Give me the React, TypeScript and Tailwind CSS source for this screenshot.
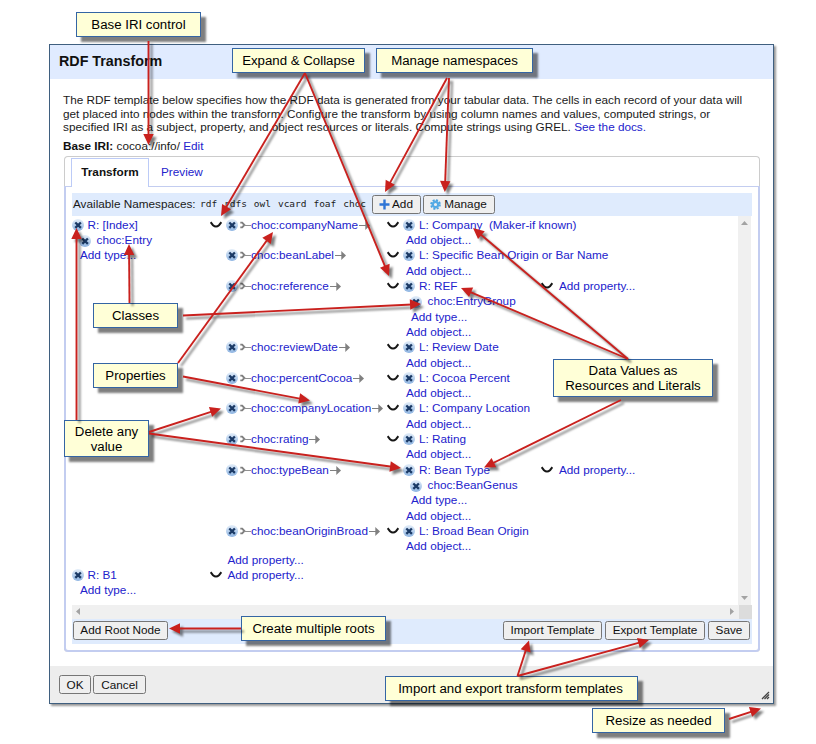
import React from 'react';

type Obj = { label: string; type?: string };

const properties: { name: string; object: Obj; hiddenCaret?: boolean }[] = [
  { name: 'choc:companyName', object: { label: 'L: Company\u00a0 (Maker-if known)' } },
  { name: 'choc:beanLabel', object: { label: 'L: Specific Bean Origin or Bar Name' } },
  { name: 'choc:reference', object: { label: 'R: REF', type: 'choc:EntryGroup' } },
  { name: 'choc:reviewDate', object: { label: 'L: Review Date' } },
  { name: 'choc:percentCocoa', object: { label: 'L: Cocoa Percent' } },
  { name: 'choc:companyLocation', object: { label: 'L: Company Location' } },
  { name: 'choc:rating', object: { label: 'L: Rating' } },
  { name: 'choc:typeBean', object: { label: 'R: Bean Type', type: 'choc:BeanGenus' }, hiddenCaret: true },
  { name: 'choc:beanOriginBroad', object: { label: 'L: Broad Bean Origin' } },
];

function DeleteIcon() {
  return (
    <svg className="block h-3 w-3 shrink-0" viewBox="0 0 12 12">
      <defs>
        <linearGradient id="del" x1="0" y1="0" x2="0" y2="1">
          <stop offset="0" stopColor="#e4eef9" />
          <stop offset="1" stopColor="#8db4e2" />
        </linearGradient>
      </defs>
      <circle cx="6" cy="6" r="6" fill="url(#del)" />
      <path d="M3.3 3.5L8.9 8.9M8.9 3.5L3.3 8.9" stroke="#1b3a66" strokeWidth="2.3" />
    </svg>
  );
}

function Caret() {
  return (
    <svg className="block h-3 w-3 shrink-0" viewBox="0 0 12 12">
      <path d="M0.6 3.2L3 6.2Q6 8.9 9 6.2L11.4 3.2" fill="none" stroke="#161616" strokeWidth="2" />
    </svg>
  );
}

function TailMark() {
  return (
    <svg className="block h-3 w-[11px] shrink-0" viewBox="0 0 11 12">
      <path d="M0.3 3.6H2.2L4.4 6L2.2 8.4H0.3" fill="none" stroke="#808080" strokeWidth="1.9" />
      <path d="M4.5 6.5H11" stroke="#909090" strokeWidth="1" />
    </svg>
  );
}

function HeadMark() {
  return (
    <svg className="block h-3 w-3 shrink-0" viewBox="0 0 12 12">
      <path d="M1 6.5H8" stroke="#808080" strokeWidth="1" />
      <path d="M7.3 2L12 6.5L7.3 11Z" fill="#808080" />
    </svg>
  );
}

function Row({ children, className = '' }: { children: React.ReactNode; className?: string }) {
  return <div className={`flex h-[15.32px] items-center ${className}`}>{children}</div>;
}

function TypeRows({ type }: { type: string }) {
  return (
    <>
      <Row className="pl-[7px]">
        <div className="pt-0.5"><DeleteIcon /></div>
        <span className="ml-[5.5px]">{type}</span>
      </Row>
      <Row className="pl-2">Add type...</Row>
    </>
  );
}

function ObjectNode({ node }: { node: Obj }) {
  return (
    <div>
      <Row>
        <div className="flex w-[138px] items-center">
          <DeleteIcon />
          <span className="ml-1">{node.label}</span>
        </div>
        {node.type && <><Caret /><span className="ml-[6px]">Add property...</span></>}
      </Row>
      {node.type && <TypeRows type={node.type} />}
      <Row className="pl-[3px]">Add object...</Row>
    </div>
  );
}

function Button({ children, className = '' }: { children: React.ReactNode; className?: string }) {
  return (
    <button className={`flex h-[19px] shrink-0 items-center justify-center whitespace-nowrap rounded-[2.5px] border border-[#767676] bg-[#efefef] text-[#111] ${className}`}>
      {children}
    </button>
  );
}

const callouts = [
  { text: ['Base IRI control'], box: 'left-[76px] top-[12px] w-[125px] h-[25px]' },
  { text: ['Expand & Collapse'], box: 'left-[232px] top-[48px] w-[133px] h-[25px]' },
  { text: ['Manage namespaces'], box: 'left-[376px] top-[48px] w-[157px] h-[25px]' },
  { text: ['Classes'], box: 'left-[93px] top-[303px] w-[85px] h-[25px]' },
  { text: ['Properties'], box: 'left-[93px] top-[363px] w-[85px] h-[25px]' },
  { text: ['Delete any', 'value'], box: 'left-[64px] top-[420px] w-[85px] h-[37px]' },
  { text: ['Data Values as', 'Resources and Literals'], box: 'left-[553px] top-[359px] w-[160px] h-[38px]' },
  { text: ['Create multiple roots'], box: 'left-[241px] top-[616px] w-[145px] h-[25px]' },
  { text: ['Import and export transform templates'], box: 'left-[385px] top-[676px] w-[253px] h-[25px] pr-0.5' },
  { text: ['Resize as needed'], box: 'left-[592px] top-[708px] w-[133px] h-[25px]' },
];

const arrows: [number, number, number, number][] = [
  [148.5, 41, 148.5, 145],
  [305, 73, 221, 216],
  [305, 73, 389, 276],
  [447, 78, 385, 192],
  [449, 78, 444.8, 192],
  [129.5, 303, 129, 244],
  [183, 315.5, 421, 304],
  [178, 363, 273, 232],
  [183, 376.5, 310, 400.5],
  [76.5, 420, 76.5, 228],
  [149, 432, 221, 408.5],
  [149, 433.5, 401, 468],
  [628, 359, 473, 228],
  [628, 359, 461, 288],
  [621, 400, 484, 467.5],
  [241, 628.5, 169, 628.5],
  [517.5, 676, 529, 640.5],
  [517.5, 676, 649, 640],
  [729, 719, 761, 708.5],
];

function Arrow({ a }: { a: [number, number, number, number] }) {
  const [x1, y1, x2, y2] = a;
  const len = Math.hypot(x2 - x1, y2 - y1);
  const angle = (Math.atan2(y2 - y1, x2 - x1) * 180) / Math.PI;
  return (
    <g transform={`translate(${x1} ${y1}) rotate(${angle})`}>
      <path d={`M0 0H${len - 9}`} stroke="#c9211e" strokeWidth="1.9" />
      <path d={`M${len} 0L${len - 11} -5.2V5.2Z`} fill="#c9211e" />
    </g>
  );
}

export default function App() {
  return (
    <div className="relative h-[744px] w-[816px] overflow-hidden bg-white pl-[49px] pt-11 font-['Liberation_Sans',Arial,sans-serif] text-[11.75px] leading-[13.6px] text-[#1a1a1a]">
      <div className="flex h-[660px] w-[725px] flex-col border border-[#3f5f7f] bg-white shadow-[2px_2px_2px_#999]">
        <h1 className="flex h-[34px] shrink-0 items-center bg-[#e0ebff] pl-[9px] text-[14.3px] font-bold text-[#111]">RDF Transform</h1>
        <div className="px-[13px] pt-[14px]">
          <p className="whitespace-nowrap">
            The RDF template below specifies how the RDF data is generated from your tabular data. The cells in each record of your data will<br />
            get placed into nodes within the transform. Configure the transform by using column names and values, computed strings, or<br />
            specified IRI as a subject, property, and object resources or literals. Compute strings using GREL. <a className="text-[#2222cc]">See the docs.</a>
          </p>
          <p className="mt-[5px]"><b className="text-[#111]">Base IRI:</b> cocoa://info/ <a className="text-[#2222cc]">Edit</a></p>
        </div>

        <div className="ml-[14px] mt-[3.2px] flex h-[496px] w-[696px] shrink-0 flex-col rounded-[4px] border-x border-t border-[#ccc]">
          <div className="flex h-[29px] shrink-0 items-end pl-[6px]">
            <div className="z-10 -mb-px flex h-[29px] w-[78px] items-center justify-center border border-b-0 border-[#bccbf7] bg-white pb-0.5 font-bold text-[#111]">Transform</div>
            <div className="flex h-[29px] items-center pl-3 pt-px text-[#2222cc]">Preview</div>
          </div>
          <div className="-mx-px flex grow flex-col rounded-b-[4px] border-2 border-t border-[#c3cdf0] px-[6px] pt-[6px]">
            <div className="flex h-[23px] shrink-0 items-center bg-[#dfebfd] pl-px">
              <span className="w-[127px] shrink-0">Available Namespaces:</span>
              <div className="flex w-[171.5px] shrink-0 gap-[6.9px] whitespace-nowrap font-['DejaVu_Sans_Mono',monospace] text-[9.5px]">
                <span>rdf</span><span>rdfs</span><span>owl</span><span>vcard</span><span>foaf</span><span>choc</span>
              </div>
              <Button className="w-[49px]">
                <svg className="mr-0.5 h-[11px] w-[11px]" viewBox="0 0 11 11"><path d="M5.5 0.5V10.5M0.5 5.5H10.5" stroke="#2f75d6" strokeWidth="2.4" /></svg>
                Add
              </Button>
              <Button className="ml-0.5 w-[72px]">
                <svg className="mr-[3px] h-[11px] w-[11px] shrink-0" viewBox="0 0 12 12">
                  <circle cx="6" cy="6" r="4.8" fill="none" stroke="#4ba3e0" strokeWidth="2" strokeDasharray="2.2 1.57" />
                  <circle cx="6" cy="6" r="3" fill="none" stroke="#55abe5" strokeWidth="2.6" />
                </svg>
                Manage
              </Button>
            </div>

            <div className="flex h-[389px] shrink-0 text-[#2222cc]">
              <div className="w-[666px] overflow-hidden whitespace-nowrap pt-[1.3px]">
                <div className="flex h-[350px]">
                  <div className="w-[138px]">
                    <Row><DeleteIcon /><span className="ml-[3.5px]">R: [Index]</span></Row>
                    <TypeRows type="choc:Entry" />
                  </div>
                  <Row><Caret /></Row>
                  <div className="ml-[3.5px]">
                    {properties.map((p) => (
                      <div key={p.name} className="flex">
                        <Row className="w-[161.5px]">
                          <DeleteIcon /><div className="ml-[2.5px]"><TailMark /></div><span>{p.name}</span><HeadMark />
                        </Row>
                        <Row className="w-4">{!p.hiddenCaret && <Caret />}</Row>
                        <ObjectNode node={p.object} />
                      </div>
                    ))}
                    <div className="flex h-3 items-center pl-0.5">Add property...</div>
                  </div>
                </div>
                <div className="flex">
                  <div className="w-[138px]">
                    <Row><DeleteIcon /><span className="ml-[3.5px]">R: B1</span></Row>
                    <Row className="pl-2">Add type...</Row>
                  </div>
                  <Row><Caret /><span className="ml-[5.5px]">Add property...</span></Row>
                </div>
              </div>
              <div className="flex w-[13px] flex-col items-center justify-between bg-[#f0f0f0] pb-[5px] pt-[5px]">
                <svg className="h-1 w-[7px]" viewBox="0 0 7 4"><path d="M0 4L3.5 0L7 4Z" fill="#a3a3a3" /></svg>
                <svg className="h-1 w-[7px]" viewBox="0 0 7 4"><path d="M0 0L3.5 4L7 0Z" fill="#a3a3a3" /></svg>
              </div>
            </div>
            <div className="flex h-3.5 shrink-0 items-center bg-[#f0f0f0]">
              <svg className="ml-1 h-[7px] w-1" viewBox="0 0 4 7"><path d="M4 0L0 3.5L4 7Z" fill="#a3a3a3" /></svg>
              <svg className="ml-auto mr-[5px] h-[7px] w-1" viewBox="0 0 4 7"><path d="M0 0L4 3.5L0 7Z" fill="#a3a3a3" /></svg>
              <div className="h-3.5 w-[13px] bg-[#dcdcdc]" />
            </div>
            <div className="flex h-[25px] shrink-0 items-start bg-[#dfebfd] pl-px pr-0.5 pt-0.5">
              <Button className="w-[95px]">Add Root Node</Button>
              <Button className="ml-auto w-[99px]">Import Template</Button>
              <Button className="ml-[3px] w-[100px]">Export Template</Button>
              <Button className="ml-[3px] w-[42px]">Save</Button>
            </div>
          </div>
        </div>

        <div className="mt-auto flex h-[37px] shrink-0 items-start gap-0.5 bg-[#ededed] pl-[9px] pt-[9px]">
          <Button className="w-8">OK</Button>
          <Button className="w-[53px]">Cancel</Button>
          <svg className="ml-auto mr-[3px] mt-4 h-[9px] w-[9px]" viewBox="0 0 9 9">
            <path d="M1 8L8 1M3.5 8L8 3.5M6 8L8 6" stroke="#444" strokeWidth="1.3" />
          </svg>
        </div>
      </div>

      {callouts.map((c) => (
        <div key={c.text[0]} className={`absolute flex flex-col items-center justify-center whitespace-nowrap border border-[#3465a4] bg-[#ffffd7] text-[13.25px] leading-[15px] text-black shadow-[5px_5px_2px_rgba(0,0,0,0.5)] ${c.box}`}>
          {c.text.map((t) => <span key={t}>{t}</span>)}
        </div>
      ))}

      <svg className="pointer-events-none absolute left-0 top-0 h-[744px] w-[816px] drop-shadow-[3px_3px_1px_rgba(0,0,0,0.5)]" viewBox="0 0 816 744">
        {arrows.map((a, i) => <Arrow key={i} a={a} />)}
      </svg>
    </div>
  );
}
